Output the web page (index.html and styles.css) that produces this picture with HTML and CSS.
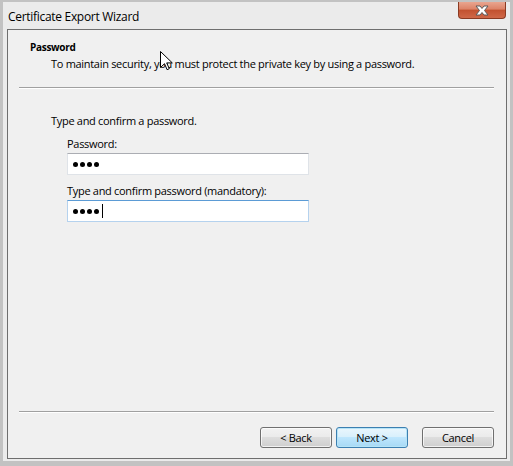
FILE: index.html
```html
<!DOCTYPE html>
<html lang="en">
<head>
  <meta charset="UTF-8">
  <meta name="viewport" content="width=device-width, initial-scale=1.0">
  <title>Certificate Export Wizard</title>
  <link rel="stylesheet" href="styles.css">
</head>
<body>
  <div class="desk">
    <div class="window">
      <div class="titlebar">
        <span class="title">Certificate Export Wizard</span>
        <button class="close" aria-label="Close">
          <svg width="14" height="11" viewBox="0 0 14 11">
            <path d="M1 1h4l2 2.5L9 1h4l-3.5 4.5L13 10H9L7 7.5 5 10H1l3.5-4.5z" fill="#fff" stroke="#5a5a5a" stroke-width="1"/>
          </svg>
        </button>
      </div>

      <div class="client">
        <div class="header">
          <div class="head-title">Password</div>
          <div class="head-sub">To maintain security, you must protect the private key by using a password.</div>
        </div>
        <div class="rule"></div>

        <div class="content">
          <p class="lead">Type and confirm a password.</p>
          <div class="field">
            <label>Password:</label>
            <div class="textbox">
              <span class="dot"></span><span class="dot"></span><span class="dot"></span><span class="dot"></span>
            </div>
          </div>
          <div class="field">
            <label>Type and confirm password (mandatory):</label>
            <div class="textbox focused">
              <span class="dot"></span><span class="dot"></span><span class="dot"></span><span class="dot"></span>
              <span class="caret"></span>
            </div>
          </div>
        </div>

        <div class="rule"></div>
        <div class="buttons">
          <button class="btn">&lt; Back</button>
          <button class="btn default">Next &gt;</button>
          <button class="btn cancel">Cancel</button>
        </div>
      </div>
    </div>

    <!-- mouse pointer resting over the subtitle -->
    <svg class="pointer" width="13" height="20" viewBox="0 0 13 20">
      <path d="M0.5 0.5v16l4-3.8 2.6 6 2.2-1-2.6-5.8h5.6z" fill="#fff" stroke="#000" stroke-width="1" stroke-linejoin="miter"/>
    </svg>
  </div>
</body>
</html>
```

FILE: styles.css
```css
body {
  margin: 0;
  font-family: "Open Sans", "Noto Sans", sans-serif;
  font-size: 11px;
  letter-spacing: -0.3px;
  color: #000;
}

.desk {
  position: relative;
  width: 513px;
  height: 466px;
  background-color: #c2c2c2;
  padding: 2px 3px 0 3px;
  box-sizing: border-box;
}

.window {
  width: 507px;
  height: 459px;
  background-color: #ebebeb;
  padding: 0 3px 2px 4px;
  box-sizing: border-box;
  display: flex;
  flex-direction: column;
}

.titlebar {
  height: 27px;
  display: flex;
  align-items: flex-start;
  justify-content: space-between;
}

.title {
  font-size: 12px;
  line-height: 16px;
  letter-spacing: -0.3px;
  margin: 7px 0 0 1px;
}

.close {
  width: 48px;
  height: 17px;
  margin: 0 1px 0 0;
  padding: 0;
  border: 1px solid #8a3a22;
  border-top: none;
  border-radius: 0 0 4px 4px;
  background: linear-gradient(#e9a58f 0%, #dc8267 45%, #c2512f 50%, #cf6848 100%);
  display: flex;
  align-items: center;
  justify-content: center;
}

.client {
  flex: 1;
  border: 1px solid #6e6e6e;
  background-color: #f0f0f0;
  display: flex;
  flex-direction: column;
}

.header {
  height: 57px;
  box-sizing: border-box;
  padding: 10px 0 0 22px;
}

.head-title {
  font-weight: bold;
  font-size: 10px;
  letter-spacing: -0.3px;
  line-height: 15px;
}

.head-sub {
  line-height: 15px;
  margin: 1px 0 0 21px;
}

.rule {
  margin: 0 12px 0 11px;
  border-top: 1px solid #a0a0a0;
  border-bottom: 1px solid #ffffff;
}

.content {
  flex: 1;
  padding: 24px 0 0 43px;
}

.lead {
  margin: 0 0 8px;
  line-height: 15px;
}

.field {
  margin-left: 16px;
  margin-bottom: 8px;
}

.field label {
  display: block;
  line-height: 15px;
  margin-bottom: 2px;
}

.textbox {
  width: 242px;
  height: 22px;
  box-sizing: border-box;
  background-color: #fff;
  border: 1px solid #dfe3e8;
  border-top-color: #abadb3;
  padding-left: 5px;
  display: flex;
  align-items: center;
  gap: 2px;
}

.textbox.focused {
  border-color: #b5d2ee;
  border-top-color: #5b9bd5;
}

.dot {
  width: 5px;
  height: 5px;
  border-radius: 50%;
  background-color: #000;
}

.caret {
  width: 1px;
  height: 14px;
  margin-left: 1px;
  background-color: #000;
}

.buttons {
  display: flex;
  justify-content: flex-end;
  gap: 4px;
  padding: 14px 12px 10px 0;
}

.btn {
  width: 72px;
  height: 21px;
  padding: 0;
  font-family: inherit;
  font-size: 11px;
  letter-spacing: -0.3px;
  color: #000;
  border: 1px solid #707070;
  border-radius: 3px;
  background: linear-gradient(#f2f2f2 0%, #ebebeb 45%, #dddddd 50%, #cfcfcf 100%);
  box-shadow: inset 0 0 0 1px rgba(255, 255, 255, 0.7);
}

.btn.default {
  border-color: #3c7fb1;
  box-shadow: inset 0 0 0 1px #b6e4f7;
  background: linear-gradient(#eaf6fd 0%, #d9f0fc 45%, #bee6fd 50%, #a7d9f5 100%);
}

.btn.cancel {
  margin-left: 10px;
}

.pointer {
  position: absolute;
  left: 160px;
  top: 51px;
}
```
